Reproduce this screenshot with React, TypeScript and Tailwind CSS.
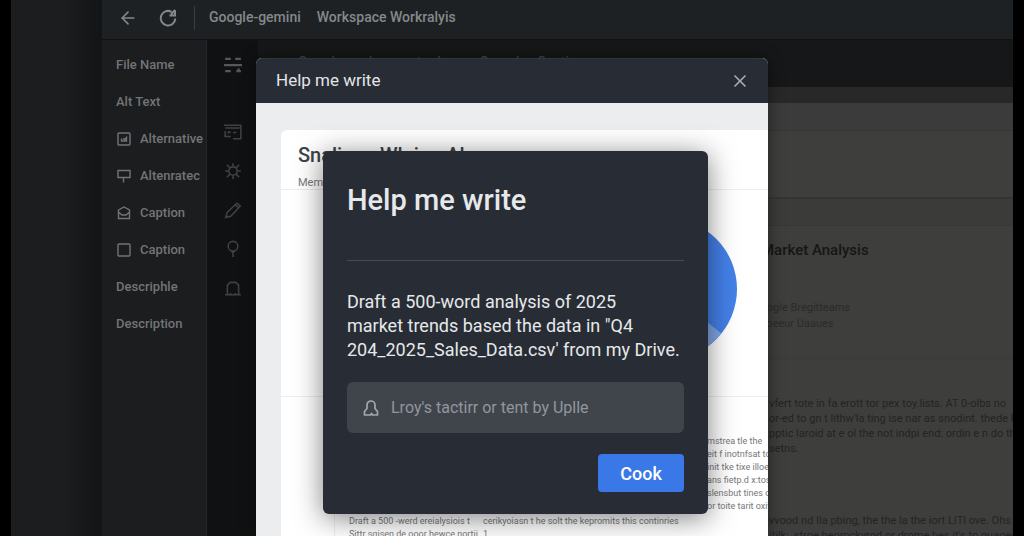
import React from 'react';
import { ArrowLeft, X } from 'lucide-react';

const sidebarItems = [
    { label: 'File Name' },
    { label: 'Alt Text' },
    { label: 'Alternative', icon: <ImageIcon /> },
    { label: 'Altenratec', icon: <SignIcon /> },
    { label: 'Caption', icon: <EnvelopeIcon /> },
    { label: 'Caption', icon: <SquareIcon /> },
    { label: 'Descriphle' },
    { label: 'Description' },
];

const tools = [
    { name: 'Cards', icon: <CardIcon /> },
    { name: 'Brightness', icon: <SunIcon /> },
    { name: 'Edit', icon: <PencilIcon /> },
    { name: 'Pin', icon: <PinIcon /> },
    { name: 'Alerts', icon: <BellIcon /> },
];

export default function App() {
    return (
        <div className="relative h-screen overflow-hidden bg-black px-[11px] font-['Roboto',sans-serif]">
            <div className="flex h-full bg-[#1c1d1f]">
                <div className="w-[91px] shrink-0 bg-linear-to-r from-[#1c1d1f] from-60% to-[#131415]" />
                <div className="flex min-w-0 flex-1 flex-col bg-[#131415]">
                    <TopBar />
                    <div className="flex min-h-0 flex-1">
                        <Sidebar />
                        <ToolRail />
                        <DocumentPane />
                    </div>
                </div>
            </div>
            <WriteDialog />
        </div>
    );
}

function TopBar() {
    return (
        <header className="flex h-10 shrink-0 items-center border-b border-[#111213] bg-[#1e2124] px-4 pb-1 text-[#85888b]">
            <button aria-label="Back">
                <ArrowLeft size={20} strokeWidth={2} />
            </button>
            <button aria-label="Reload" className="ml-5">
                <ReloadIcon />
            </button>
            <span className="ml-4 h-6 border-l border-[#3b3e41]" />
            <nav className="ml-[14px] flex gap-4 text-[14px] font-medium whitespace-nowrap">
                <a href="#gemini">Google-gemini</a>
                <a href="#workspace">Workspace Workralyis</a>
            </nav>
        </header>
    );
}

function Sidebar() {
    return (
        <aside className="w-[105px] shrink-0 overflow-hidden border-r border-[#25282a] bg-[#1b1d1f] pt-[6px] pl-[14px]">
            <ul className="text-[13px] font-medium whitespace-nowrap text-[#727477]">
                {sidebarItems.map((item, i) => (
                    <li key={i} className="flex h-[37px] items-center gap-2">
                        {item.icon}
                        <span>{item.label}</span>
                    </li>
                ))}
            </ul>
        </aside>
    );
}

function ToolRail() {
    return (
        <div className="flex w-[51px] shrink-0 flex-col items-center bg-[#101112] pt-[5px] text-[#3f4143]">
            <button aria-label="Menu" className="mb-7 flex h-[39px] items-center text-[#55585a]">
                <GridIcon />
            </button>
            {tools.map((tool) => (
                <button key={tool.name} aria-label={tool.name} className="flex h-[39px] items-center">
                    {tool.icon}
                </button>
            ))}
        </div>
    );
}

function DocumentPane() {
    return (
        <main className="flex min-w-0 flex-1 flex-col">
            <div className="flex h-[47px] shrink-0 gap-8 bg-[#161718] pt-3 pl-10 text-[14px] text-[#4a4c4e]">
                <span>Google workspace tools</span>
                <span>Samples Section</span>
            </div>
            <div className="h-4 shrink-0 bg-[#282829]" />
            <div className="flex min-h-0 flex-1 flex-col bg-[#3e3e3d]">
                <div className="h-7 shrink-0 border-b border-[#363636] bg-[#3b3b3b]" />
                <div className="h-[68px] shrink-0 border-b-2 border-[#353535]" />
                <div className="h-[27px] shrink-0 border-b border-[#373737] bg-[#3b3b3a]" />
                <article className="ml-auto w-[260px] overflow-hidden whitespace-nowrap text-[#242424]">
                    <h2 className="mt-[14px] pl-2 text-[15px] leading-5 font-medium text-[#161616]">Market Analysis</h2>
                    <p className="mt-10 text-[11px] leading-4 text-[#2b2b2b]">
                        Google Bregitteams
                        <br />
                        Apoeeur Uaaues
                    </p>
                    <div className="mt-[26px] mb-[37px] border-t border-[#3a3a3a]" />
                    <p className="pl-4 text-[11px] leading-[15px]">
                        vfert tote in fa erott tor pex toy.lists. AT 0-olbs no
                        <br />
                        or-ed to gn t lithw&apos;la ting ise nar as snodint. thede llo
                        <br />
                        pptic laroid at e ol the not indpi end: ordin e n do the
                        <br />
                        setns.
                    </p>
                    <p className="mt-[57px] pl-4 text-[11px] leading-[15px]">
                        vvood nd Ila pbing, the the la the iort LITl ove. Ohs e
                        <br />
                        itilk:, stroe heorockyrod or drome hes it&apos;s to guaged
                    </p>
                </article>
            </div>
        </main>
    );
}

function WriteDialog() {
    return (
        <section
            aria-label="Help me write"
            className="absolute top-[58px] bottom-0 left-1/2 flex w-[512px] -translate-x-1/2 flex-col rounded-t-md bg-[#ebedef] shadow-[0_0_16px_rgba(0,0,0,0.45)]"
        >
            <header className="flex h-[45px] shrink-0 items-center justify-between rounded-t-md border-t border-[#30353b] bg-[#282d35] px-5 text-[#e3e5e7]">
                <h2 className="text-[17px]">Help me write</h2>
                <button aria-label="Close" className="text-[#a8abb0]">
                    <X size={20} strokeWidth={2} className="-mr-0.5" />
                </button>
            </header>
            <div className="min-h-0 flex-1 overflow-hidden pt-[27px] pl-[25px]">
                <ReportCard />
            </div>
            <PromptDialog />
        </section>
    );
}

function ReportCard() {
    return (
        <div className="h-full overflow-hidden rounded-tl-md bg-white whitespace-nowrap text-[#77797b]">
            <div className="h-[60px] border-b border-[#eeeeee] pt-[13px] pl-[17px]">
                <h3 className="text-[20px] leading-6 font-medium text-[#3d4349]">Snalings Wlning Al</h3>
                <p className="mt-2 text-[11px] leading-4">Memos</p>
            </div>
            <div className="flex h-[207px] justify-end border-b border-[#eeeeee] pt-7 pr-[31px]">
                <svg width="142" height="142" viewBox="-71 -71 142 142">
                    <circle r="71" fill="#4480e8" />
                    <path d="M0 0 L55.4 44.4 A71 71 0 0 1 -30 64.4 Z" fill="#82a6e6" />
                </svg>
            </div>
            <div className="ml-[53px] border-l border-[#eeeeee] pt-[38px] pl-[14px] text-[9px] leading-[13px]">
                <p className="ml-auto w-[61px]">
                    mstrea tle the
                    <br />
                    eit f inotnfsat to
                    <br />
                    init tke tixe illoe
                    <br />
                    ans fietp.d x:tos
                    <br />
                    slensbut tines o
                    <br />
                    or toite tarit oxit.
                </p>
                <div className="mt-[2px] flex gap-[14px]">
                    <p className="w-[120px] shrink-0">
                        Draft a 500 -werd ereialysiois t
                        <br />
                        Sittr sqisen de ooor hewce nortii
                    </p>
                    <p>
                        cerikyoiasn t he solt the kepromits this continries
                        <br />1
                    </p>
                </div>
            </div>
        </div>
    );
}

function PromptDialog() {
    return (
        <form
            onSubmit={(e) => e.preventDefault()}
            className="absolute top-[93px] left-[67px] w-[385px] rounded-md bg-[#282d35] px-6 pt-[31px] pb-[22px] text-[#e6e8ea] shadow-[0_4px_28px_rgba(0,0,0,0.5)]"
        >
            <h1 className="text-[29px] leading-9 font-medium">Help me write</h1>
            <hr className="mt-[42px] border-[#464b52]" />
            <p className="mt-[29px] text-[18px] leading-6 whitespace-nowrap">
                Draft a 500-word analysis of 2025
                <br />
                market trends based the data in &quot;Q4
                <br />
                204_2025_Sales_Data.csv&apos; from my Drive.
            </p>
            <div className="mt-5 flex h-[51px] items-center gap-3 rounded-md bg-[#40454c] px-4 text-[#a3a7ac]">
                <NotifyIcon />
                <input
                    type="text"
                    aria-label="Prompt"
                    placeholder="Lroy's tactirr or tent by Uplle"
                    className="min-w-0 flex-1 bg-transparent text-[16px] outline-none placeholder:text-[#92969c]"
                />
            </div>
            <div className="mt-[21px] flex justify-end">
                <button type="submit" className="h-[38px] w-[86px] rounded-[4px] bg-[#3b78e7] text-[18px] font-medium text-white">
                    Cook
                </button>
            </div>
        </form>
    );
}

function Icon({ size = 16, children }: any) {
    return (
        <svg className="shrink-0" width={size} height={size} viewBox="0 0 16 16" fill="none" stroke="currentColor" strokeWidth="1.4">
            {children}
        </svg>
    );
}

function ReloadIcon() {
    return (
        <svg width="20" height="20" viewBox="0 0 20 20" fill="none" stroke="currentColor" strokeWidth="2">
            <path d="M13.5 3.8A7.3 7.3 0 1 0 17.3 10.5M17 2v5.500h-5.500M17 2l-4 4.500" />
        </svg>
    );
}

function ImageIcon() {
    return (
        <Icon>
            <rect x="2" y="2" width="12" height="12" rx="1" />
            <path d="M5.5 7.5v2.500h5V6.500L8.500 8.500 7 7.500" />
        </Icon>
    );
}

function SignIcon() {
    return (
        <Icon>
            <path d="M6 9.5H2v-7h12v7H9.5M6 9.5h3.500M7.500 9.500v5" />
        </Icon>
    );
}

function EnvelopeIcon() {
    return (
        <Icon>
            <path d="M2.500 5 8 2l5.500 3v8.500h-11zM3 7.500l3 2.500h4l3-2.500" />
        </Icon>
    );
}

function SquareIcon() {
    return (
        <Icon>
            <rect x="2" y="2" width="12" height="12" rx="1" />
        </Icon>
    );
}

function GridIcon() {
    return (
        <Icon size={18}>
            <path d="M1 2.500h5M10 2.500h5M0 8h16M1 13.500h5M11 13.500h4" strokeWidth="2" />
            <path d="M13 11v3" strokeWidth="2" />
        </Icon>
    );
}

function CardIcon() {
    return (
        <Icon size={18}>
            <path d="M0 2h15v12H8M1 4.500h13M1 7v5h5M4 9.500V8h2M8 8.500h3" />
        </Icon>
    );
}

function SunIcon() {
    return (
        <Icon size={18}>
            <circle cx="8" cy="8" r="3.7" />
            <path d="M8 1v3M8 12v3M1 8h3M12 8h3M2.500 2.500l3 3M10.500 10.500l3 3M2.500 13.500l3-3M10.500 5.500l3-3" />
        </Icon>
    );
}

function PencilIcon() {
    return (
        <Icon size={18}>
            <path d="M1.500 14.500 3 10l8.500-8 3 2.500L6 13.500zM10 3.500l3 2.500" />
        </Icon>
    );
}

function PinIcon() {
    return (
        <Icon size={18}>
            <circle cx="8" cy="5.5" r="4.3" />
            <path d="M8 9.500V15M6.500 9.500l1.500 2 1.500-2" />
        </Icon>
    );
}

function BellIcon() {
    return (
        <Icon size={18}>
            <path d="M1 14h14M3 14V5.500L5.500 3h5L13 5.500V14M5.500 12.500 6.500 14M10.500 12.500 9.500 14" />
        </Icon>
    );
}

function NotifyIcon() {
    return (
        <svg className="shrink-0" width="16" height="18" viewBox="0 0 16 18" fill="none" stroke="currentColor" strokeWidth="1.7" strokeLinejoin="round">
            <path d="M1.500 16v-3.500l2.500-3V6a4 4 0 0 1 8 0v3.500l2.500 3V16H9.500l-1-1.500-1 1.500z" />
        </svg>
    );
}
